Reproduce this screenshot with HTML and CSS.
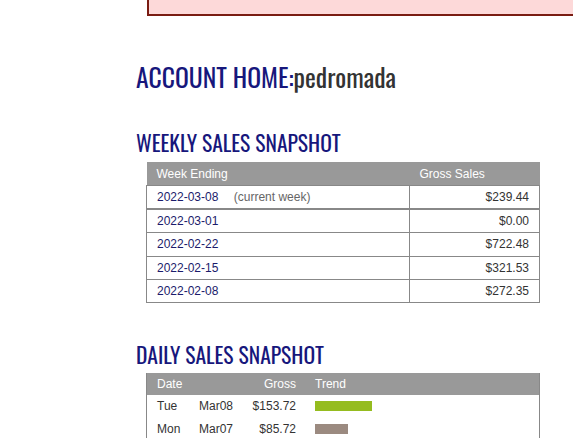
FILE: index.html
```html
<!doctype html>
<html>
    <head>
        <link rel="stylesheet" href="styles.css">
    </head>
    <body>
        <div class="aviso"></div>
        <main>
            <h1>ACCOUNT HOME:<span class="usuario">pedromada</span></h1>

            <h2 class="titulo-semanal">WEEKLY SALES SNAPSHOT</h2>
            <table class="semanal">
                <thead>
                    <tr>
                        <th>Week Ending</th>
                        <th class="col-total">Gross Sales</th>
                    </tr>
                </thead>
                <tbody>
                    <tr class="actual">
                        <td>2022-03-08 <span class="nota">(current week)</span></td>
                        <td class="monto">$239.44</td>
                    </tr>
                    <tr>
                        <td>2022-03-01</td>
                        <td class="monto">$0.00</td>
                    </tr>
                    <tr>
                        <td>2022-02-22</td>
                        <td class="monto">$722.48</td>
                    </tr>
                    <tr>
                        <td>2022-02-15</td>
                        <td class="monto">$321.53</td>
                    </tr>
                    <tr>
                        <td>2022-02-08</td>
                        <td class="monto">$272.35</td>
                    </tr>
                </tbody>
            </table>

            <h2 class="titulo-diario">DAILY SALES SNAPSHOT</h2>
            <table class="diaria">
                <thead>
                    <tr>
                        <th colspan="2">Date</th>
                        <th class="gross">Gross</th>
                        <th class="trend">Trend</th>
                    </tr>
                </thead>
                <tbody>
                    <tr>
                        <td class="dia">Tue</td>
                        <td class="fecha">Mar08</td>
                        <td class="gross">$153.72</td>
                        <td><div class="barra verde" style="width: 57px"></div></td>
                    </tr>
                    <tr>
                        <td class="dia">Mon</td>
                        <td class="fecha">Mar07</td>
                        <td class="gross">$85.72</td>
                        <td><div class="barra gris" style="width: 33px"></div></td>
                    </tr>
                </tbody>
            </table>
        </main>
    </body>
</html>
```

FILE: styles.css
```css
* {
    margin: 0;
    padding: 0;
}
body {
    background: white;
    font-family: "Liberation Sans", Arial, sans-serif;
    font-size: 12px;
    color: #333;
    overflow: hidden;
}
.aviso {
    margin-left: 147px;
    height: 14px;
    background: #fdd9d9;
    border: 2px solid #7a1c12;
    border-top: none;
    border-right: none;
}
main {
    padding-left: 136px;
}
h1,
h2 {
    font-family: Oswald, "DejaVu Sans Condensed", sans-serif;
    font-weight: normal;
    color: #17177c;
}
h1 {
    font-size: 25.7px;
    line-height: 30px;
    margin-top: 45px;
}
h1 .usuario {
    color: #333;
}
h2 {
    font-size: 21.6px;
    line-height: 26px;
}
.titulo-semanal {
    margin-top: 38px;
}
.titulo-diario {
    margin-top: 38px;
}
table {
    border-collapse: collapse;
    margin-left: 10px;
    width: 394px;
}
th {
    background: #999;
    color: white;
    font-weight: normal;
    text-align: left;
    height: 23px;
    padding: 0 10px;
}
.semanal {
    margin-top: 7px;
}
.semanal td {
    border: 1px solid #888;
    height: 22.2px;
    padding: 0 10px;
    color: #1b1b6b;
}
.semanal .col-total {
    width: 110px;
}
.semanal tr.actual td {
    border-bottom: 2px solid #888;
}
.semanal td.monto {
    text-align: right;
    color: #333;
}
.nota {
    color: #666;
    margin-left: 12px;
}
.diaria {
    margin-top: 6px;
    border-left: 1px solid #888;
    border-right: 1px solid #888;
}
.diaria th {
    height: 22px;
}
.diaria th.trend {
    padding-left: 0;
}
.diaria td {
    height: 23px;
    padding: 0;
}
.diaria th.gross,
.diaria td.gross {
    text-align: right;
    padding: 0 19px 0 0;
}
.diaria td.dia {
    padding-left: 10px;
    width: 42px;
}
.diaria td.fecha {
    width: 50px;
}
.diaria td.gross {
    width: 47px;
}
.barra {
    height: 10px;
}
.verde {
    background: #95bc1f;
}
.gris {
    background: #9b8a80;
}
```
